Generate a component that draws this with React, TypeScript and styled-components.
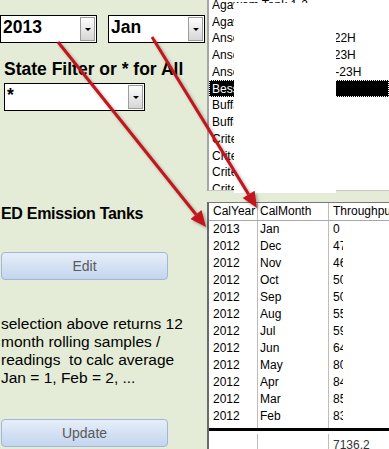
import React from 'react';
import styled, { createGlobalStyle } from 'styled-components';

const Global = createGlobalStyle`
  html, body { margin: 0; padding: 0; overflow: hidden; background: #E4ECD7; }
  body { font-family: "Liberation Sans", Arial, sans-serif; }
`;

const Page = styled.div`
  position: relative;
  width: 389px;
  height: 449px;
  overflow: hidden;
  display: flex;
  background: #E4ECD7;
`;

const LeftPanel = styled.div`
  width: 207px;
  flex: none;
  display: flex;
  flex-direction: column;
  align-items: flex-start;
  padding-top: 15px;
  box-sizing: border-box;
`;

const ComboRow = styled.div`
  display: flex;
  gap: 11px;
`;

const Combo = styled.div<{ $w: number; $ml?: number; $mt?: number }>`
  width: ${(p) => p.$w}px;
  height: 28px;
  margin-left: ${(p) => p.$ml ?? 0}px;
  margin-top: ${(p) => p.$mt ?? 0}px;
  box-sizing: border-box;
  border: 1px solid #000;
  background: #fff;
  display: flex;
  align-items: flex-start;
  justify-content: space-between;
  padding: 1px 1px 1px 2px;
`;

const ComboText = styled.span`
  font-weight: bold;
  font-size: 17.5px;
  line-height: 20px;
  color: #000;
`;

const DropButton = styled.span`
  width: 15px;
  height: 24px;
  box-sizing: border-box;
  border: 1px solid #9c9c9c;
  background: linear-gradient(#fdfdfd, #d6d6d6);
  display: flex;
  align-items: center;
  justify-content: center;
  &::after {
    content: '';
    border-left: 3px solid transparent;
    border-right: 3px solid transparent;
    border-top: 3px solid #000;
  }
`;

const Heading = styled.div<{ $size: number; $mt: number; $pl: number; $ls?: number }>`
  font-weight: bold;
  font-size: ${(p) => p.$size}px;
  letter-spacing: ${(p) => p.$ls ?? 0}px;
  line-height: 20px;
  margin-top: ${(p) => p.$mt}px;
  padding-left: ${(p) => p.$pl}px;
  color: #000;
  white-space: nowrap;
`;

const FormButton = styled.div<{ $mt: number }>`
  width: 167px;
  height: 28px;
  margin-left: 1px;
  margin-top: ${(p) => p.$mt}px;
  box-sizing: border-box;
  border: 1px solid #9fb6d9;
  border-radius: 4px;
  background: linear-gradient(#e6eef9, #c3d5ee);
  display: flex;
  align-items: center;
  justify-content: center;
  font-size: 14px;
  color: #5a5a5a;
`;

const Note = styled.div`
  margin-top: 35px;
  padding-left: 1px;
  font-size: 15.5px;
  line-height: 18px;
  color: #000;
  white-space: nowrap;
`;

const RightCol = styled.div`
  position: relative;
  flex: 1;
  display: flex;
  flex-direction: column;
  min-width: 0;
`;

const ListBox = styled.div`
  height: 191px;
  flex: none;
  box-sizing: border-box;
  border-left: 2px solid #a5a5a5;
  border-bottom: 1px solid #c8c8c8;
  background: #fff;
  overflow: hidden;
`;

const ListInner = styled.div`
  margin-top: -3.4px;
`;

const ListRow = styled.div<{ $sel?: boolean }>`
  height: 16.75px;
  box-sizing: border-box;
  display: flex;
  align-items: center;
  padding-left: 3px;
  font-size: 12px;
  white-space: nowrap;
  color: ${(p) => (p.$sel ? '#fff' : '#000')};
  background: ${(p) => (p.$sel ? '#000' : 'transparent')};
  outline: ${(p) => (p.$sel ? '1px dotted #fff' : 'none')};
  outline-offset: -1px;
`;

const ListName = styled.span`
  width: 98px;
  flex: none;
  overflow: hidden;
`;

const Redaction = styled.div`
  position: absolute;
  left: 27px;
  top: 3px;
  width: 102px;
  height: 190px;
  background: #fff;
`;

const DataSheet = styled.div`
  margin-top: 11px;
  flex: 1;
  display: flex;
  flex-direction: column;
  background: #fff;
  border-top: 1px solid #7a7a7a;
  border-left: 2px solid #6a6a6a;
  font-size: 12px;
  color: #000;
`;

const SheetRow = styled.div<{ $h: number; $header?: boolean }>`
  display: grid;
  grid-template-columns: 49px 71px 1fr;
  height: ${(p) => p.$h}px;
  flex: none;
  box-sizing: border-box;
  border-bottom: ${(p) => (p.$header ? '1px solid #a8a8a8' : 'none')};
`;

const TotalRow = styled(SheetRow)`
  flex: 1;
  height: auto;
  color: #333;
  padding-top: 3px;
  & > span { padding-top: 3px; }
`;

const Cell = styled.span<{ $col: number }>`
  box-sizing: border-box;
  padding-left: ${(p) => (p.$col === 1 ? 2 : 4)}px;
  border-right: ${(p) => (p.$col < 2 ? '1px solid #bdbdbd' : 'none')};
  line-height: 17px;
  white-space: nowrap;
  overflow: hidden;
`;

const Clip = styled.span`
  display: inline-block;
  width: 10px;
  overflow: hidden;
  vertical-align: top;
`;

const TotalLine = styled.div`
  height: 3px;
  flex: none;
  background: #000;
`;

const Arrows = styled.svg`
  position: absolute;
  left: 0;
  top: 0;
  pointer-events: none;
  filter: drop-shadow(2px 2px 1.5px rgba(0, 0, 0, 0.3));
`;

const listItems: { name: string; code: string }[] = [
  { name: 'Agawam Tank 1-2-3', code: '' },
  { name: 'Agawam', code: '' },
  { name: 'Ansonia', code: 'CW-22H' },
  { name: 'Ansonia', code: 'CW-23H' },
  { name: 'Ansonia', code: 'TW1-23H' },
  { name: 'Bessemer', code: '' },
  { name: 'Buffalo', code: '' },
  { name: 'Buffalo', code: '' },
  { name: 'Criterion', code: '' },
  { name: 'Criterion', code: '' },
  { name: 'Criterion', code: '' },
  { name: 'Criterion', code: '' },
];

const rows: [string, string, string][] = [
  ['2013', 'Jan', '0'],
  ['2012', 'Dec', '477.6'],
  ['2012', 'Nov', '468.2'],
  ['2012', 'Oct', '503.1'],
  ['2012', 'Sep', '507.9'],
  ['2012', 'Aug', '553.4'],
  ['2012', 'Jul', '594.0'],
  ['2012', 'Jun', '647.3'],
  ['2012', 'May', '808.2'],
  ['2012', 'Apr', '846.5'],
  ['2012', 'Mar', '855.0'],
  ['2012', 'Feb', '835.8'],
];

export default function App() {
  return (
    <>
      <Global />
      <Page>
        <LeftPanel>
          <ComboRow>
            <Combo $w={97}>
              <ComboText>2013</ComboText>
              <DropButton />
            </Combo>
            <Combo $w={97}>
              <ComboText>Jan</ComboText>
              <DropButton />
            </Combo>
          </ComboRow>
          <Heading $size={17.5} $mt={16} $pl={4}>
            State Filter or * for All
          </Heading>
          <Combo $w={141} $ml={4} $mt={4}>
            <ComboText>*</ComboText>
            <DropButton />
          </Combo>
          <Heading $size={16} $mt={93} $pl={1} $ls={-0.3}>
            ED Emission Tanks
          </Heading>
          <FormButton $mt={28}>Edit</FormButton>
          <Note>
            selection above returns 12
            <br />
            month rolling samples /
            <br />
            {'readings\u00a0 to calc average'}
            <br />
            Jan = 1, Feb = 2, ...
          </Note>
          <FormButton $mt={32}>Update</FormButton>
        </LeftPanel>
        <RightCol>
          <ListBox>
            <ListInner>
              {listItems.map((it, i) => (
                <ListRow key={i} $sel={i === 5}>
                  <ListName>{it.name}</ListName>
                  <span>{it.code}</span>
                </ListRow>
              ))}
            </ListInner>
          </ListBox>
          <Redaction />
          <DataSheet>
            <SheetRow $h={18} $header>
              <Cell $col={0}>CalYear</Cell>
              <Cell $col={1}>CalMonth</Cell>
              <Cell $col={2}>Throughput</Cell>
            </SheetRow>
            {rows.map(([y, m, v], i) => (
              <SheetRow key={i} $h={17}>
                <Cell $col={0}>{y}</Cell>
                <Cell $col={1}>{m}</Cell>
                <Cell $col={2}>{v === '0' ? v : <Clip>{v}</Clip>}</Cell>
              </SheetRow>
            ))}
            <SheetRow $h={3}>
              <Cell $col={0} />
              <Cell $col={1} />
              <Cell $col={2} />
            </SheetRow>
            <TotalLine />
            <TotalRow $h={18}>
              <Cell $col={0} />
              <Cell $col={1} />
              <Cell $col={2}>7136.2</Cell>
            </TotalRow>
          </DataSheet>
        </RightCol>
        <Arrows width="389" height="449" viewBox="0 0 389 449">
          <line x1="58" y1="42" x2="196" y2="214.5" stroke="#c3151b" strokeWidth="3" />
          <polygon points="206,227 190.5,218.9 201.5,210.1" fill="#c3151b" />
          <line x1="152" y1="37" x2="248.6" y2="194.4" stroke="#c3151b" strokeWidth="3" />
          <polygon points="257,208 242.7,198.1 254.6,190.7" fill="#c3151b" />
        </Arrows>
      </Page>
    </>
  );
}
